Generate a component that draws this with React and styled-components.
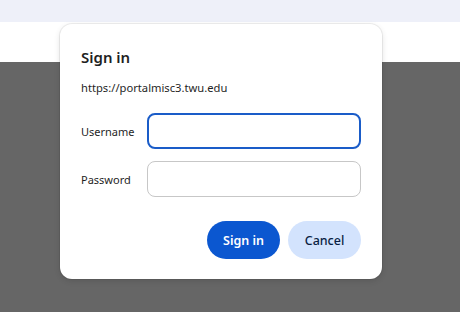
import React from 'react';
import styled, { createGlobalStyle } from 'styled-components';

const GlobalStyle = createGlobalStyle`
  html, body {
    margin: 0;
    padding: 0;
    width: 460px;
    height: 312px;
    overflow: hidden;
    font-family: "Noto Sans", "Open Sans", sans-serif;
  }
`;

const Page = styled.div`
  position: relative;
  width: 460px;
  height: 312px;
  display: grid;
  grid-template-rows: 22px 40px 1fr;
`;

const TopBar = styled.div`
  background: #eef0f9;
`;

const WhiteBand = styled.div`
  background: #ffffff;
`;

const Shade = styled.div`
  background: #666666;
`;

const Dialog = styled.div`
  position: absolute;
  left: 60px;
  top: 24px;
  width: 322px;
  height: 255px;
  box-sizing: border-box;
  background: #ffffff;
  border-radius: 12px;
  box-shadow: 0 0 0 1px rgba(0, 0, 0, 0.06), 0 2px 6px rgba(0, 0, 0, 0.12);
  padding: 22px 21px 20px 21px;
  display: flex;
  flex-direction: column;
`;

const Title = styled.h2`
  margin: 0;
  font-size: 15px;
  font-weight: 600;
  color: #1f1f1f;
  line-height: 22px;
`;

const Origin = styled.div`
  margin-top: 12px;
  font-size: 11.2px;
  color: #1f1f1f;
  line-height: 16px;
`;

const Form = styled.div`
  margin-top: 17px;
  display: grid;
  grid-template-columns: 66px 1fr;
  row-gap: 12px;
  align-items: center;
`;

const Label = styled.label`
  font-size: 11px;
  color: #1f1f1f;
`;

const Input = styled.input`
  height: 36px;
  box-sizing: border-box;
  width: 214px;
  border-radius: 8px;
  border: ${(p) => (p.$focused ? '2px solid #1a5cc8' : '1px solid #c7c7c7')};
  background: #ffffff;
  outline: none;
  font-family: inherit;
  font-size: 13px;
  padding: 0 10px;
`;

const Actions = styled.div`
  margin-top: 24px;
  display: flex;
  justify-content: flex-end;
  gap: 8px;
`;

const Button = styled.button`
  height: 38px;
  width: 73px;
  border: none;
  border-radius: 19px;
  font-family: inherit;
  font-size: 12.5px;
  font-weight: ${(p) => (p.$primary ? 600 : 500)};
  background: ${(p) => (p.$primary ? '#0b57d0' : '#d3e3fd')};
  color: ${(p) => (p.$primary ? '#ffffff' : '#0a1f44')};
  cursor: pointer;
`;

export default function App() {
  return (
    <>
      <GlobalStyle />
      <Page>
        <TopBar />
        <WhiteBand />
        <Shade />
        <Dialog>
          <Title>Sign in</Title>
          <Origin>https://portalmisc3.twu.edu</Origin>
          <Form>
            <Label>Username</Label>
            <Input $focused type="text" />
            <Label>Password</Label>
            <Input type="password" />
          </Form>
          <Actions>
            <Button $primary>Sign in</Button>
            <Button>Cancel</Button>
          </Actions>
        </Dialog>
      </Page>
    </>
  );
}
